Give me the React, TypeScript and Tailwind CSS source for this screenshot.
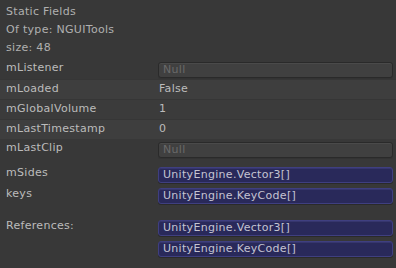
const font = { fontFamily: '"DejaVu Sans", "Liberation Sans", sans-serif' };

function NullBox() {
  return (
    <div className="mt-[3px] h-[16px] w-[235px] rounded-[3px] border border-[#2a2a2a] bg-[#404040] pl-[4px] text-[11px] leading-[14px] text-[#6a6a6a] shadow-[inset_0_1px_0_#4a4a4a,0_1px_0_#333]">
      Null
    </div>
  );
}

function ObjBox({ text }: { text: string }) {
  return (
    <div className="mt-[3px] h-[16px] w-[235px] rounded-[3px] border border-[#3f3f80] bg-[#29295a] pl-[4px] text-[11px] leading-[14px] text-[#c4c4d2] shadow-[inset_0_1px_0_#36366e,0_1px_0_#2a2a2a]">
      {text}
    </div>
  );
}

function Row({ label, children, h = "h-[20px]" }: { label: string; children: React.ReactNode; h?: string }) {
  return (
    <div className={`flex items-start ${h}`}>
      <div className="w-[158px] shrink-0 pl-[6px] pt-[1px] leading-[16px]">{label}</div>
      {children}
    </div>
  );
}

function ValueRow({ label, value, bg }: { label: string; value: string; bg: string }) {
  return (
    <div className={`flex h-[20px] items-center border-t border-[#363636] ${bg}`}>
      <div className="w-[158px] shrink-0 pl-[6px]">{label}</div>
      <div className="pl-[1px]">{value}</div>
    </div>
  );
}

export default function App() {
  return (
    <div className="h-[268px] w-[396px] overflow-hidden bg-[#383838] pt-[3px] text-[11px] tracking-[0.3px] text-[#bcbcbc]" style={font}>
      <div className="pl-[6px] leading-[18px] text-[#b0b0b0]">Static Fields</div>
      <div className="pl-[6px] leading-[18px] text-[#b0b0b0]">Of type: NGUITools</div>
      <div className="pl-[6px] leading-[18px] text-[#b0b0b0]">size: 48</div>

      <div className="mt-[2px]">
        <Row label="mListener">
          <NullBox />
        </Row>
        <ValueRow label="mLoaded" value="False" bg="bg-[#3e3e3e]" />
        <ValueRow label="mGlobalVolume" value="1" bg="bg-[#3b3b3b]" />
        <ValueRow label="mLastTimestamp" value="0" bg="bg-[#3e3e3e]" />
        <Row label="mLastClip">
          <NullBox />
        </Row>
      </div>

      <div className="mt-[5px]">
        <Row label="mSides" h="h-[21px]">
          <ObjBox text="UnityEngine.Vector3[]" />
        </Row>
        <Row label="keys" h="h-[21px]">
          <ObjBox text="UnityEngine.KeyCode[]" />
        </Row>
      </div>

      <div className="mt-[11px]">
        <Row label="References:" h="h-[21px]">
          <ObjBox text="UnityEngine.Vector3[]" />
        </Row>
        <Row label="" h="h-[21px]">
          <ObjBox text="UnityEngine.KeyCode[]" />
        </Row>
      </div>
    </div>
  );
}
